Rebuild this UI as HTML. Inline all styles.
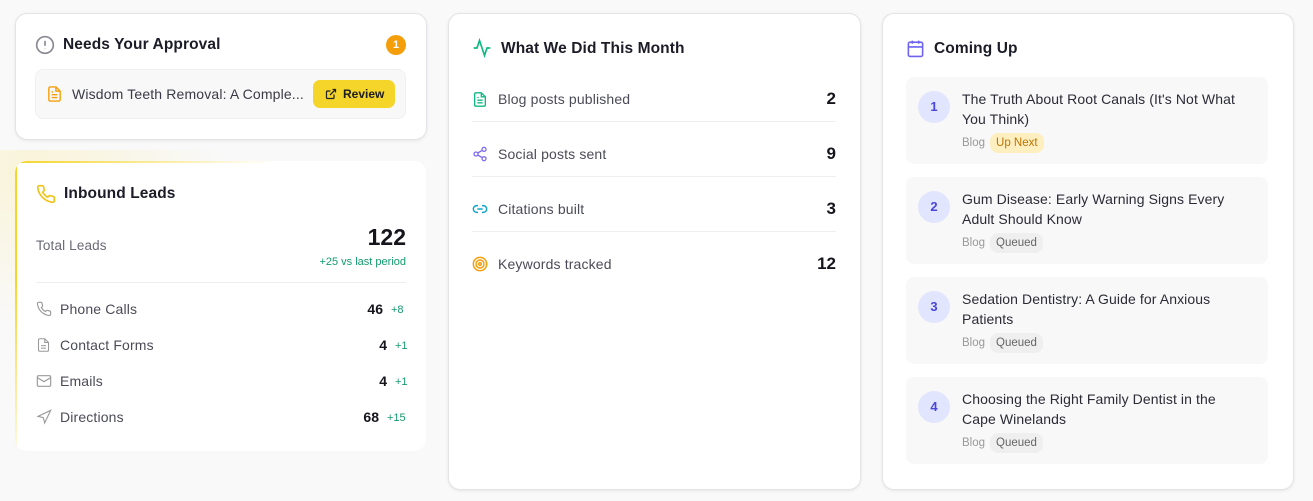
<!DOCTYPE html>
<html><head><style>
*{box-sizing:border-box;margin:0;padding:0}
body{width:1313px;height:501px;background:#f9f9f9;font-family:"Liberation Sans",sans-serif;position:relative;overflow:hidden;color:#1f1f2a}
.card{position:absolute;background:#fff;border:1px solid #e4e4e7;border-radius:12px;box-shadow:0 1px 3px rgba(0,0,0,.08)}
.h{position:absolute;font-size:15.5px;font-weight:bold;color:#1c1c28;letter-spacing:.1px}
.ic{position:absolute}
.t{position:absolute;font-size:14px;color:#4b4b57;letter-spacing:.15px}
.n{position:absolute;font-size:14px;font-weight:bold;color:#15151c;text-align:right}
.g{position:absolute;font-size:11px;color:#139a6e}
.line{position:absolute;height:1px;background:#eeeeef}
.item{position:absolute;left:906px;width:362px;height:87px;background:#f8f8f8;border-radius:8px}
.num{position:absolute;left:12px;top:14px;width:32px;height:32px;border-radius:50%;background:#e1e5fd;color:#4a46d8;font-size:13px;font-weight:bold;text-align:center;line-height:32px}
.it{position:absolute;left:56px;top:12px;width:290px;font-size:14px;line-height:20px;color:#2b2b36;letter-spacing:.1px}
.meta{position:absolute;left:56px;top:56px;font-size:11.5px;color:#999;line-height:20px}
.tag{display:inline-block;margin-left:5px;padding:0 6px;border-radius:8px;background:#efefef;color:#666;line-height:20px}
.tag.y{background:#fdefc0;color:#c07400}
</style></head><body>

<div class="card" style="left:15px;top:13px;width:412px;height:127px"></div>
<svg class="ic" style="left:35px;top:35px" width="20" height="20" viewBox="0 0 24 24" fill="none" stroke="#8a8a94" stroke-width="2"><circle cx="12" cy="12" r="10"/><path d="M12 7v6M12 16.5v.5"/></svg>
<div class="h" style="left:63px;top:36px">Needs Your Approval</div>
<div style="position:absolute;left:386px;top:35px;width:20px;height:20px;border-radius:50%;background:#f59e0b;color:#fff;font-size:11px;font-weight:bold;text-align:center;line-height:20px">1</div>
<div style="position:absolute;left:35px;top:69px;width:371px;height:50px;background:#f8f8f8;border:1px solid #f0f0f0;border-radius:8px"></div>
<svg class="ic" style="left:46px;top:85px" width="17" height="18" viewBox="0 0 24 24" fill="none" stroke="#f59e0b" stroke-width="2"><path d="M14 2H6a2 2 0 0 0-2 2v16a2 2 0 0 0 2 2h12a2 2 0 0 0 2-2V8z"/><path d="M14 2v6h6M8 13h8M8 17h8M8 9h2"/></svg>
<div class="t" style="left:72px;top:86px;color:#3a3a46">Wisdom Teeth Removal: A Comple...</div>
<div style="position:absolute;left:313px;top:80px;width:82px;height:28px;background:#f6d52a;border-radius:7px;font-size:12px;font-weight:bold;color:#1c1c1c;line-height:28px;padding-left:30px">Review</div>
<svg class="ic" style="left:325px;top:88px" width="12" height="12" viewBox="0 0 24 24" fill="none" stroke="#222" stroke-width="2.5"><path d="M18 13v6a2 2 0 0 1-2 2H5a2 2 0 0 1-2-2V8a2 2 0 0 1 2-2h6M15 3h6v6M10 14L21 3"/></svg>

<div style="position:absolute;left:0;top:150px;width:260px;height:200px;background:radial-gradient(ellipse at 12% 10%,rgba(250,220,70,.18),rgba(250,220,70,0) 60%)"></div>
<div class="card" style="left:15px;top:161px;width:411px;height:290px;border:none;box-shadow:none;overflow:hidden">
  <div style="position:absolute;left:0;top:0;width:2px;height:100%;background:linear-gradient(#f5d52a,#f5d52a 40%,rgba(245,213,42,.15))"></div>
  <div style="position:absolute;left:0;top:0;width:260px;height:2px;background:linear-gradient(90deg,#f5d52a,rgba(245,213,42,0))"></div>
</div>
<svg class="ic" style="left:36px;top:184px" width="20" height="20" viewBox="0 0 24 24" fill="none" stroke="#f2c318" stroke-width="2"><path d="M22 16.9v3a2 2 0 0 1-2.2 2 19.8 19.8 0 0 1-8.6-3.1 19.5 19.5 0 0 1-6-6A19.8 19.8 0 0 1 2.1 4.2 2 2 0 0 1 4.1 2h3a2 2 0 0 1 2 1.7c.1 1 .4 1.900 .7 2.8a2 2 0 0 1-.5 2.1L8 9.8a16 16 0 0 0 6 6l1.3-1.3a2 2 0 0 1 2.1-.4c.9.3 1.8.6 2.8.7a2 2 0 0 1 1.7 2z"/></svg>
<div class="h" style="left:64px;top:185px">Inbound Leads</div>
<div class="t" style="left:36px;top:238px;color:#6a6a75;font-size:13.5px">Total Leads</div>
<div class="n" style="left:300px;top:224px;width:106px;font-size:23px">122</div>
<div class="g" style="left:280px;top:256px;width:126px;text-align:right">+25 vs last period</div>
<div class="line" style="left:36px;top:282px;width:370px"></div>
<svg class="ic" style="left:36px;top:301px" width="16" height="16" viewBox="0 0 24 24" fill="none" stroke="#999" stroke-width="1.7"><path d="M22 16.9v3a2 2 0 0 1-2.2 2 19.8 19.8 0 0 1-8.6-3.1 19.5 19.5 0 0 1-6-6A19.8 19.8 0 0 1 2.1 4.2 2 2 0 0 1 4.1 2h3a2 2 0 0 1 2 1.7c.1 1 .4 1.9.7 2.8a2 2 0 0 1-.5 2.1L8 9.8a16 16 0 0 0 6 6l1.3-1.3a2 2 0 0 1 2.1-.4c.9.3 1.8.6 2.8.7a2 2 0 0 1 1.7 2z"/></svg>
<div class="t" style="left:60px;top:301px">Phone Calls</div>
<div class="n" style="left:330px;top:301px;width:53px">46</div><div class="g" style="left:391px;top:304px">+8</div>
<svg class="ic" style="left:36px;top:337px" width="15" height="16" viewBox="0 0 24 24" fill="none" stroke="#999" stroke-width="1.7"><path d="M14 2H6a2 2 0 0 0-2 2v16a2 2 0 0 0 2 2h12a2 2 0 0 0 2-2V8z"/><path d="M14 2v6h6M8 13h8M8 17h8"/></svg>
<div class="t" style="left:60px;top:337px">Contact Forms</div>
<div class="n" style="left:330px;top:337px;width:57px">4</div><div class="g" style="left:395px;top:340px">+1</div>
<svg class="ic" style="left:36px;top:373px" width="16" height="16" viewBox="0 0 24 24" fill="none" stroke="#999" stroke-width="1.7"><rect x="2" y="4" width="20" height="16" rx="2"/><path d="M22 7l-10 6L2 7"/></svg>
<div class="t" style="left:60px;top:373px">Emails</div>
<div class="n" style="left:330px;top:373px;width:57px">4</div><div class="g" style="left:395px;top:376px">+1</div>
<svg class="ic" style="left:36px;top:409px" width="16" height="16" viewBox="0 0 24 24" fill="none" stroke="#999" stroke-width="1.7"><path d="M3 11l19-9-9 19-2-8z"/></svg>
<div class="t" style="left:60px;top:409px">Directions</div>
<div class="n" style="left:330px;top:409px;width:49px">68</div><div class="g" style="left:387px;top:412px">+15</div>

<div class="card" style="left:448px;top:13px;width:413px;height:477px"></div>
<svg class="ic" style="left:472px;top:38px" width="20" height="20" viewBox="0 0 24 24" fill="none" stroke="#10b981" stroke-width="2"><path d="M22 12h-4l-3 9L9 3l-3 9H2"/></svg>
<div class="h" style="left:501px;top:40px">What We Did This Month</div>
<svg class="ic" style="left:472px;top:91px" width="16" height="17" viewBox="0 0 24 24" fill="none" stroke="#10b981" stroke-width="2"><path d="M14 2H6a2 2 0 0 0-2 2v16a2 2 0 0 0 2 2h12a2 2 0 0 0 2-2V8z"/><path d="M14 2v6h6M8 13h8M8 17h8M8 9h2"/></svg>
<div class="t" style="left:498px;top:91px">Blog posts published</div><div class="n" style="left:780px;top:89px;width:56px;font-size:17px">2</div>
<div class="line" style="left:472px;top:121px;width:364px"></div>
<svg class="ic" style="left:472px;top:146px" width="16" height="16" viewBox="0 0 24 24" fill="none" stroke="#7c6cf0" stroke-width="2"><circle cx="18" cy="5" r="3"/><circle cx="6" cy="12" r="3"/><circle cx="18" cy="19" r="3"/><path d="M8.6 13.5l6.8 4M15.4 6.5l-6.8 4"/></svg>
<div class="t" style="left:498px;top:146px">Social posts sent</div><div class="n" style="left:780px;top:144px;width:56px;font-size:17px">9</div>
<div class="line" style="left:472px;top:176px;width:364px"></div>
<svg class="ic" style="left:472px;top:201px" width="16" height="16" viewBox="0 0 24 24" fill="none" stroke="#0ea5c9" stroke-width="2.2"><path d="M9 17H7A5 5 0 0 1 7 7h2M15 7h2a5 5 0 0 1 0 10h-2M8 12h8"/></svg>
<div class="t" style="left:498px;top:201px">Citations built</div><div class="n" style="left:780px;top:199px;width:56px;font-size:17px">3</div>
<div class="line" style="left:472px;top:231px;width:364px"></div>
<svg class="ic" style="left:472px;top:256px" width="16" height="16" viewBox="0 0 24 24" fill="none" stroke="#f59e0b" stroke-width="2.2"><circle cx="12" cy="12" r="10"/><circle cx="12" cy="12" r="6"/><circle cx="12" cy="12" r="2"/></svg>
<div class="t" style="left:498px;top:256px">Keywords tracked</div><div class="n" style="left:780px;top:254px;width:56px;font-size:17px">12</div>

<div class="card" style="left:882px;top:13px;width:412px;height:477px"></div>
<svg class="ic" style="left:906px;top:39px" width="19" height="19" viewBox="0 0 24 24" fill="none" stroke="#6d63f0" stroke-width="2"><rect x="3" y="4" width="18" height="18" rx="2"/><path d="M16 2v4M8 2v4M3 10h18"/></svg>
<div class="h" style="left:934px;top:40px">Coming Up</div>

<div class="item" style="top:77px"><div class="num">1</div><div class="it" style="width:288px">The Truth About Root Canals (It's Not What You Think)</div><div class="meta">Blog<span class="tag y">Up Next</span></div></div>
<div class="item" style="top:177px"><div class="num">2</div><div class="it" style="width:265px">Gum Disease: Early Warning Signs Every Adult Should Know</div><div class="meta">Blog<span class="tag">Queued</span></div></div>
<div class="item" style="top:277px"><div class="num">3</div><div class="it" style="width:262px">Sedation Dentistry: A Guide for Anxious Patients</div><div class="meta">Blog<span class="tag">Queued</span></div></div>
<div class="item" style="top:377px"><div class="num">4</div><div class="it" style="width:275px">Choosing the Right Family Dentist in the Cape Winelands</div><div class="meta">Blog<span class="tag">Queued</span></div></div>
</body></html>
